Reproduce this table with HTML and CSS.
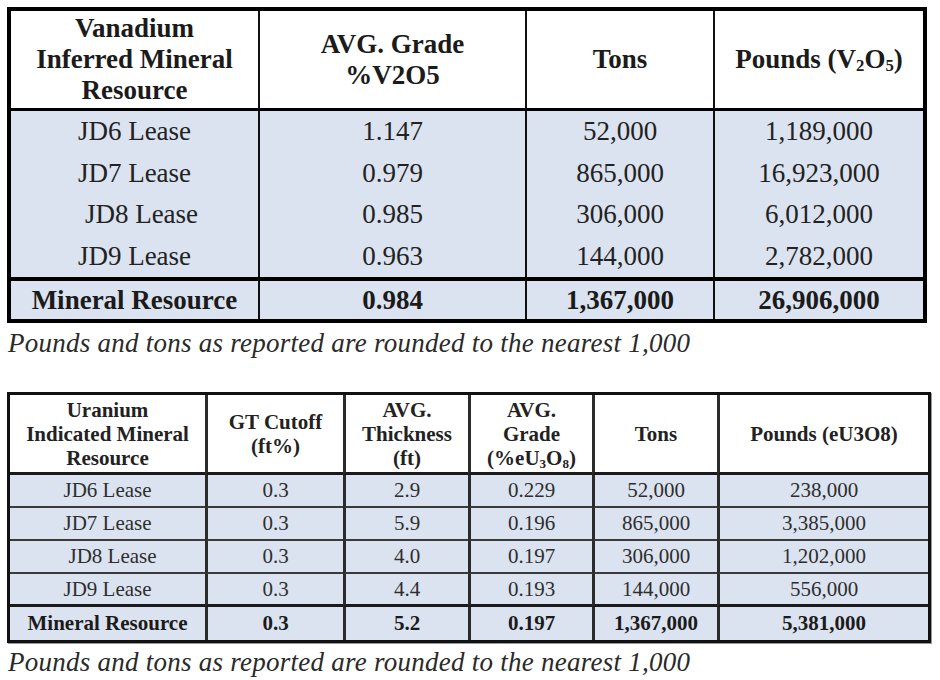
FILE: index.html
```html
<!DOCTYPE html>
<html lang="en">
<head>
    <meta charset="UTF-8">
    <meta name="viewport" content="width=device-width, initial-scale=1.0">
    <title>Mineral Resource Tables</title>
    <link rel="stylesheet" href="styles.css">
</head>
<body>
    <div class="page">
        <table class="vanadium">
            <colgroup>
                <col style="width: 247px">
                <col style="width: 267px">
                <col style="width: 188px">
                <col style="width: 210px">
            </colgroup>
            <tr class="head">
                <th>Vanadium<br>Inferred Mineral<br>Resource</th>
                <th>AVG. Grade<br>%V2O5</th>
                <th>Tons</th>
                <th>Pounds (V<sub>2</sub>O<sub>5</sub>)</th>
            </tr>
            <tr class="row r41">
                <td>JD6 Lease</td>
                <td>1.147</td>
                <td>52,000</td>
                <td>1,189,000</td>
            </tr>
            <tr class="row r42">
                <td>JD7 Lease</td>
                <td>0.979</td>
                <td>865,000</td>
                <td>16,923,000</td>
            </tr>
            <tr class="row r41">
                <td class="nudge">JD8 Lease</td>
                <td>0.985</td>
                <td>306,000</td>
                <td>6,012,000</td>
            </tr>
            <tr class="row r42">
                <td>JD9 Lease</td>
                <td>0.963</td>
                <td>144,000</td>
                <td>2,782,000</td>
            </tr>
            <tr class="total">
                <td>Mineral Resource</td>
                <td>0.984</td>
                <td>1,367,000</td>
                <td>26,906,000</td>
            </tr>
        </table>
        <p class="note">Pounds and tons as reported are rounded to the nearest 1,000</p>

        <table class="uranium">
            <colgroup>
                <col style="width: 195px">
                <col style="width: 138px">
                <col style="width: 125px">
                <col style="width: 124px">
                <col style="width: 125px">
                <col style="width: 211px">
            </colgroup>
            <tr class="head">
                <th>Uranium<br>Indicated Mineral<br>Resource</th>
                <th>GT Cutoff<br>(ft%)</th>
                <th>AVG.<br>Thickness<br>(ft)</th>
                <th>AVG.<br>Grade<br>(%eU<sub>3</sub>O<sub>8</sub>)</th>
                <th>Tons</th>
                <th>Pounds (eU3O8)</th>
            </tr>
            <tr class="row">
                <td>JD6 Lease</td>
                <td>0.3</td>
                <td>2.9</td>
                <td>0.229</td>
                <td>52,000</td>
                <td>238,000</td>
            </tr>
            <tr class="row">
                <td>JD7 Lease</td>
                <td>0.3</td>
                <td>5.9</td>
                <td>0.196</td>
                <td>865,000</td>
                <td>3,385,000</td>
            </tr>
            <tr class="row">
                <td class="nudge">JD8 Lease</td>
                <td>0.3</td>
                <td>4.0</td>
                <td>0.197</td>
                <td>306,000</td>
                <td>1,202,000</td>
            </tr>
            <tr class="row last">
                <td>JD9 Lease</td>
                <td>0.3</td>
                <td>4.4</td>
                <td>0.193</td>
                <td>144,000</td>
                <td>556,000</td>
            </tr>
            <tr class="total">
                <td>Mineral Resource</td>
                <td>0.3</td>
                <td>5.2</td>
                <td>0.197</td>
                <td>1,367,000</td>
                <td>5,381,000</td>
            </tr>
        </table>
        <p class="note">Pounds and tons as reported are rounded to the nearest 1,000</p>
    </div>
</body>
</html>
```

FILE: styles.css
```css
body {
    margin: 0;
    background: #ffffff;
    font-family: "Liberation Serif", "Times New Roman", serif;
    color: #1b1b1b;
}
.page {
    padding: 7px 0 0 7px;
}
table {
    border-spacing: 0;
    table-layout: fixed;
    text-align: center;
}
th, td {
    padding: 0;
    vertical-align: middle;
}
th + th, td + td {
    border-left: 2px solid #111;
}
sub {
    font-size: 0.62em;
    vertical-align: -0.2em;
    line-height: 0;
}

/* vanadium table */
.vanadium {
    width: 920px;
    border: 4px solid #000;
    font-size: 27px;
}
.vanadium .head {
    height: 100px;
}
.vanadium th {
    font-weight: bold;
    line-height: 31px;
    background: #fff;
    border-bottom: 3px solid #000;
}
.vanadium .row td {
    background: #dbe3f0;
    color: #222;
}
.vanadium .r41 { height: 41px; }
.vanadium .r42 { height: 42px; }
.vanadium .total {
    height: 42px;
}
.vanadium .total td {
    font-weight: bold;
    background: #dbe3f0;
    border-top: 4px solid #000;
}
.vanadium .nudge {
    padding-left: 14px;
}

.note {
    margin: 5px 0 0 1px;
    font-style: italic;
    font-size: 27px;
    line-height: 30px;
    letter-spacing: 0.25px;
    color: #2a2a2a;
}

/* uranium table */
.uranium {
    width: 924px;
    margin-top: 34px;
    border: 3px solid #111;
    font-size: 21px;
    color: #2e2e2e;
    box-shadow: 1px 1px 0 #999;
}
.uranium th + th, .uranium td + td {
    border-left: 3px solid #2b2b2b;
}
.uranium .head {
    height: 80px;
}
.uranium th {
    font-weight: bold;
    line-height: 24px;
    color: #222;
    background: #fff;
    border-bottom: 3px solid #1a1a1a;
}
.uranium .row {
    height: 33px;
}
.uranium .row td {
    background: #dbe3f0;
    border-bottom: 2px solid #3a3a3a;
}
.uranium .row.last td {
    border-bottom: 3px solid #1a1a1a;
}
.uranium .total {
    height: 33px;
}
.uranium .total td {
    font-weight: bold;
    color: #1b1b1b;
    background: #dbe3f0;
}
.uranium .nudge {
    padding-left: 10px;
}
.uranium + .note {
    margin-top: 4px;
}
```
